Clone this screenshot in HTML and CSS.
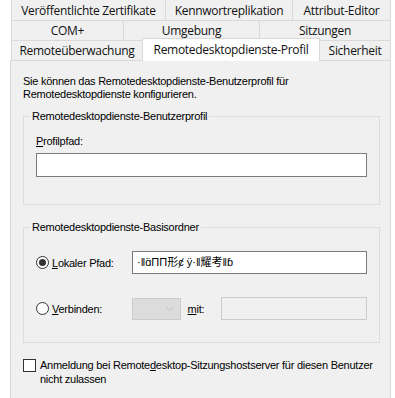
FILE: index.html
```html
<!DOCTYPE html>
<html lang="de">
<head>
<meta charset="utf-8">
<title>Eigenschaften</title>
<link rel="stylesheet" href="styles.css">
</head>
<body>
<div class="dialog">
    <div class="tabrow first">
        <div class="tab w-zert">Veröffentlichte Zertifikate</div>
        <div class="tab w-kenn">Kennwortreplikation</div>
        <div class="tab w-attr last">Attribut-Editor</div>
    </div>
    <div class="tabrow">
        <div class="tab w-com">COM+</div>
        <div class="tab w-umg">Umgebung</div>
        <div class="tab w-sitz last">Sitzungen</div>
    </div>
    <div class="tabrow">
        <div class="tab w-remue">Remoteüberwachung</div>
        <div class="tab w-prof active">Remotedesktopdienste-Profil</div>
        <div class="tab w-sich last">Sicherheit</div>
    </div>

    <div class="panel">
        <p class="intro">Sie können das Remotedesktopdienste-Benutzerprofil für<br>Remotedesktopdienste konfigurieren.</p>

        <fieldset class="group group-profile">
            <legend>Remotedesktopdienste-Benutzerprofil</legend>
            <div class="group-body">
                <div class="label"><u>P</u>rofilpfad:</div>
                <div class="textbox wide"></div>
            </div>
        </fieldset>

        <fieldset class="group group-home">
            <legend>Remotedesktopdienste-Basisordner</legend>
            <div class="group-body">
                <div class="option-row">
                    <div class="option">
                        <span class="radio checked"></span>
                        <span><u>L</u>okaler Pfad:</span>
                    </div>
                    <div class="textbox path">·ǁɑ̈ΠΠ形ȼ ÿ·ǁ耀考ǁɓ</div>
                </div>
                <div class="option-row">
                    <div class="option">
                        <span class="radio"></span>
                        <span><u>V</u>erbinden:</span>
                    </div>
                    <div class="combo">
                        <svg width="9" height="6" viewBox="0 0 9 6"><path d="M0.5 0.5 L4.5 4.5 L8.5 0.5" fill="none" stroke="#c2c2c2" stroke-width="1"/></svg>
                    </div>
                    <div class="with"><u>m</u>it:</div>
                    <div class="textbox disabled"></div>
                </div>
            </div>
        </fieldset>

        <div class="check-row">
            <span class="checkbox"></span>
            <span>Anmeldung bei Remote<u>d</u>esktop-Sitzungshostserver für diesen Benutzer<br>nicht zulassen</span>
        </div>
    </div>
</div>
</body>
</html>
```

FILE: styles.css
```css
html, body {
    margin: 0;
    padding: 0;
    background: #ffffff;
}

body {
    color: #000000;
    font-family: "Liberation Sans", Arial, sans-serif;
    font-size: 11px;
    letter-spacing: -0.25px;
}

.dialog {
    width: 381px;
    margin-left: 10px;
}

/* tab strip: three rows */
.tabrow {
    display: flex;
    margin-left: 1px;
    height: 20px;
}

.tab {
    box-sizing: border-box;
    height: 20px;
    border-left: 1px solid #d9d9d9;
    border-top: 1px solid #d9d9d9;
    background: #f0f0f0;
    font-family: "Open Sans", "Noto Sans", sans-serif;
    font-size: 12px;
    letter-spacing: -0.3px;
    line-height: 20px;
    text-align: center;
    white-space: nowrap;
    color: #111111;
}

.first .tab {
    border-top: none;
    line-height: 22px;
}

.tab.last {
    border-right: 1px solid #d9d9d9;
}

.w-zert { width: 154px; }
.w-kenn { width: 127px; }
.w-attr { width: 99px; }
.w-com { width: 112px; }
.w-umg { width: 136px; }
.w-sich { width: 72px; margin-left: -1px; }
.w-sitz { width: 132px; }
.w-remue { width: 131px; }
.w-prof { width: 178px; }

.tab.active {
    position: relative;
    z-index: 1;
    height: 23px;
    margin-top: -2px;
    background: #ffffff;
    border-right: 1px solid #d9d9d9;
    line-height: 22px;
}

/* page */
.panel {
    box-sizing: border-box;
    height: 340px;
    border: 1px solid #d9d9d9;
    background: #f0f0f0;
    padding: 14px 10px 0 12px;
}

.intro {
    margin: 0;
    line-height: 13px;
}

.group {
    margin: 9px 0 0 0;
    padding: 0;
    border: 1px solid #dcdcdc;
    min-inline-size: 0;
}

.group legend {
    margin-left: 6px;
    padding: 0 2px;
    line-height: 13px;
}

.group-profile .group-body {
    padding: 12px 13px 27px 12px;
}

.label {
    line-height: 13px;
}

.textbox {
    box-sizing: border-box;
    border: 1px solid #7a7a7a;
    background: #ffffff;
}

.textbox.wide {
    margin-top: 5px;
    height: 24px;
    width: 331px;
}

.group-home {
    margin-top: 16px;
}

.group-home .group-body {
    padding: 17px 12px 22px 12px;
    display: flex;
    flex-direction: column;
    gap: 23px;
}

.option-row {
    display: flex;
    align-items: center;
    height: 23px;
}

.option {
    width: 96px;
    display: flex;
    align-items: center;
    gap: 3px;
}

.radio {
    box-sizing: border-box;
    width: 13px;
    height: 13px;
    border: 1px solid #333333;
    border-radius: 50%;
    background: #ffffff;
    display: flex;
    align-items: center;
    justify-content: center;
}

.radio.checked::after {
    content: "";
    width: 7px;
    height: 7px;
    border-radius: 50%;
    background: #333333;
}

.textbox.path {
    width: 235px;
    height: 23px;
    padding-left: 4px;
    line-height: 21px;
    font-family: "Liberation Sans", "Noto Sans CJK SC", sans-serif;
    letter-spacing: 0;
    white-space: nowrap;
    overflow: hidden;
}

.combo {
    box-sizing: border-box;
    width: 49px;
    height: 22px;
    margin-top: 1px;
    border: 1px solid #cccccc;
    background: #dcdcdc;
    display: flex;
    align-items: center;
    justify-content: flex-end;
    padding-right: 6px;
}

.with {
    width: 34px;
    margin-left: 7px;
}

.textbox.disabled {
    width: 146px;
    height: 23px;
    border-color: #cccccc;
    background: #f0f0f0;
}

.check-row {
    margin-top: 15px;
    display: flex;
    align-items: flex-start;
    gap: 4px;
    line-height: 14px;
}

.checkbox {
    box-sizing: border-box;
    flex: none;
    width: 13px;
    height: 13px;
    margin-top: 1px;
    border: 1px solid #333333;
    background: #ffffff;
}
```
